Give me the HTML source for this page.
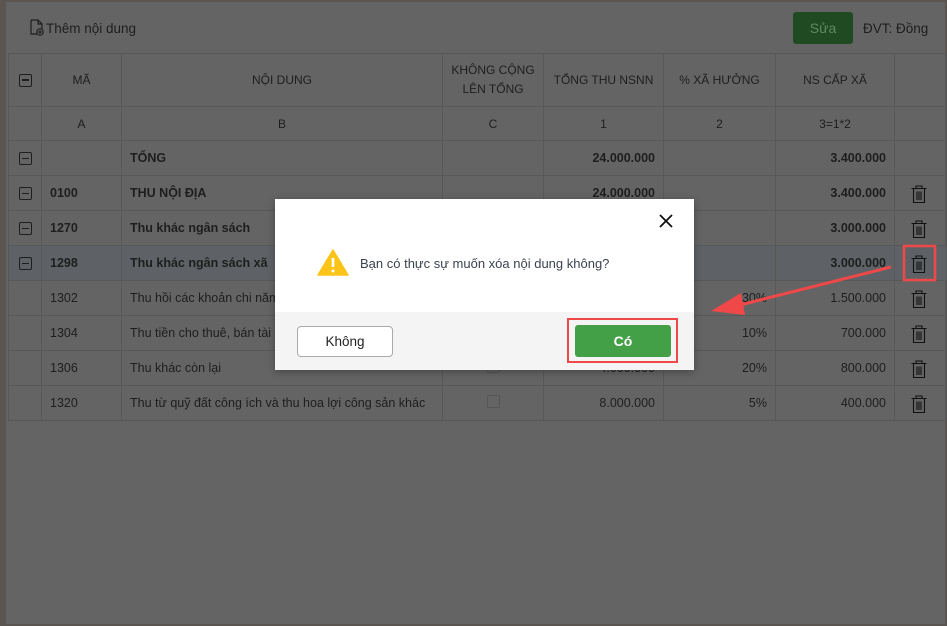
<!DOCTYPE html>
<html><head><meta charset="utf-8"><style>
*{box-sizing:border-box;margin:0;padding:0}
body{width:947px;height:626px;overflow:hidden;background:#646464;font-family:"Liberation Sans",sans-serif;font-size:12.5px;color:#1e1e1e;position:relative}
.frame{position:absolute;inset:0;border:2px solid #5b5552;border-left:6px solid #5b5552}
.abs{position:absolute}
table{position:absolute;left:8px;top:53px;border-collapse:collapse;table-layout:fixed;width:938px}
td{border:1px solid #585858;height:35px;padding:0 8px;white-space:nowrap;overflow:hidden}
tr.h td{height:53px;text-align:center;font-size:12px;line-height:19px}
tr.s td{height:34px;text-align:center;font-size:12px}
.r{text-align:right}.c{text-align:center}.b{font-weight:bold}
.sel td{background:#5e6266}
.mb{display:inline-block;width:13px;height:13px;border:1.5px solid #1e1e1e;border-radius:2px;position:relative;vertical-align:middle}
.mb:after{content:"";position:absolute;left:2px;right:2px;top:4.5px;height:1.5px;background:#1e1e1e}
.cb{display:inline-block;width:13px;height:13px;border:1px solid #555;border-radius:2px}
</style></head><body>
<div class="frame"></div>
<div class="abs" style="left:30px;top:19px;font-size:13.5px;color:#1e1e1e">
<svg width="14" height="17" viewBox="0 0 14 17" style="vertical-align:-3px;margin-right:2px" fill="none" stroke="#1e1e1e" stroke-width="1.2"><path d="M1 1h7l4 4v5M1 1v14h6M8 1v4h4"/><circle cx="10" cy="13" r="3.2"/><path d="M10 11.3v3.4M8.3 13h3.4"/></svg>Thêm nội dung</div>
<div class="abs" style="left:793px;top:12px;width:60px;height:32px;background:#1f4a22;border-radius:3px;color:#5e8a60;text-align:center;line-height:32px;font-size:14px">Sửa</div>
<div class="abs" style="left:863px;top:21px;font-size:13.5px;color:#1e1e1e">ĐVT: Đồng</div>
<table>
<colgroup><col style="width:33px"><col style="width:80px"><col style="width:321px"><col style="width:101px"><col style="width:120px"><col style="width:112px"><col style="width:119px"><col style="width:52px"></colgroup>
<tr class="h"><td><span class="mb"></span></td><td>MÃ</td><td>NỘI DUNG</td><td>KHÔNG CỘNG<br>LÊN TỔNG</td><td>TỔNG THU NSNN</td><td>% XÃ HƯỞNG</td><td>NS CẤP XÃ</td><td></td></tr>
<tr class="s"><td></td><td>A</td><td>B</td><td>C</td><td>1</td><td>2</td><td>3=1*2</td><td></td></tr>
<tr class="b"><td class="c"><span class="mb"></span></td><td></td><td>TỔNG</td><td></td><td class="r">24.000.000</td><td></td><td class="r">3.400.000</td><td></td></tr>
<tr class="b"><td class="c"><span class="mb"></span></td><td>0100</td><td>THU NỘI ĐỊA</td><td></td><td class="r">24.000.000</td><td></td><td class="r">3.400.000</td><td class="c T"></td></tr>
<tr class="b"><td class="c"><span class="mb"></span></td><td>1270</td><td>Thu khác ngân sách</td><td></td><td></td><td></td><td class="r">3.000.000</td><td class="c T"></td></tr>
<tr class="b sel"><td class="c"><span class="mb"></span></td><td>1298</td><td>Thu khác ngân sách xã</td><td></td><td></td><td></td><td class="r">3.000.000</td><td class="c T"></td></tr>
<tr><td></td><td>1302</td><td>Thu hồi các khoản chi năm trước</td><td class="c"><span class="cb"></span></td><td class="r">5.000.000</td><td class="r">30%</td><td class="r">1.500.000</td><td class="c T"></td></tr>
<tr><td></td><td>1304</td><td>Thu tiền cho thuê, bán tài sản</td><td class="c"><span class="cb"></span></td><td class="r">7.000.000</td><td class="r">10%</td><td class="r">700.000</td><td class="c T"></td></tr>
<tr><td></td><td>1306</td><td>Thu khác còn lại</td><td class="c"><span class="cb"></span></td><td class="r">4.000.000</td><td class="r">20%</td><td class="r">800.000</td><td class="c T"></td></tr>
<tr><td></td><td>1320</td><td>Thu từ quỹ đất công ích và thu hoa lợi công sản khác</td><td class="c"><span class="cb"></span></td><td class="r">8.000.000</td><td class="r">5%</td><td class="r">400.000</td><td class="c T"></td></tr>
</table>
<svg class="abs" style="left:0;top:0" width="947" height="626">
<defs><g id="t" fill="none" stroke="#111" stroke-width="1.1"><path d="M-7.5-5.5h15M-3-5.5v-2.5h6v2.5M-5.5-5.5v14h11v-14M-2-2.5v8.5M0-2.5v8.5M2-2.5v8.5"/></g></defs>
<use href="#t" x="919" y="194"/><use href="#t" x="919" y="229"/><use href="#t" x="919" y="264"/><use href="#t" x="919" y="299"/><use href="#t" x="919" y="334"/><use href="#t" x="919" y="369"/><use href="#t" x="919" y="404"/>
<rect x="904" y="246" width="31" height="34" fill="none" stroke="#f04848" stroke-width="2.5"/>
<line x1="891" y1="267" x2="740" y2="305" stroke="#f04848" stroke-width="3"/>
<polygon points="711,311 741,293 745,315" fill="#f04848"/>
</svg>
<div class="abs" style="left:275px;top:199px;width:419px;height:171px;background:#fff;box-shadow:0 2px 8px rgba(0,0,0,.3)">
<svg class="abs" style="left:383px;top:14px" width="16" height="16"><path d="M2 2L14 14M14 2L2 14" stroke="#111" stroke-width="1.8"/></svg>
<svg class="abs" style="left:42px;top:50px" width="32" height="27"><path d="M16 1L31 26H1Z" fill="#fcc419" stroke="#fcc419" stroke-linejoin="round" stroke-width="1.5"/><path d="M16 9v9" stroke="#fff" stroke-width="2.6"/><circle cx="16" cy="22" r="1.5" fill="#fff"/></svg>
<div class="abs" style="left:85px;top:57px;font-size:13px;color:#3c4252">Bạn có thực sự muốn xóa nội dung không?</div>
<div class="abs" style="left:0;top:113px;width:419px;height:58px;background:#f4f4f4">
<div class="abs" style="left:22px;top:14px;width:96px;height:31px;border:1px solid #aaa;border-radius:4px;background:#fff;text-align:center;line-height:29px;font-size:13.5px;color:#222">Không</div>
<div class="abs" style="left:292px;top:6px;width:111px;height:45px;border:2.5px solid #f04848"></div>
<div class="abs" style="left:300px;top:13px;width:96px;height:32px;background:#43a047;border-radius:3px;text-align:center;line-height:32px;color:#fff;font-weight:bold;font-size:14px">Có</div>
</div></div>
</body></html>
